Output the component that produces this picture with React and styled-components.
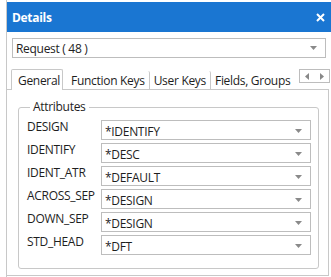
import React from 'react'
import styled, { createGlobalStyle } from 'styled-components'

const GlobalStyle = createGlobalStyle`
    body {
        margin:0;
        background:#fff;
        overflow:hidden;
        font-family:"Open Sans", "Noto Sans", sans-serif;
        font-size:12px;
        letter-spacing:-0.3px;
        color:#1e1e1e;
    }
`;

const attributes = [
    ['DESIGN', '*IDENTIFY'],
    ['IDENTIFY', '*DESC'],
    ['IDENT_ATR', '*DEFAULT'],
    ['ACROSS_SEP', '*DESIGN'],
    ['DOWN_SEP', '*DESIGN'],
    ['STD_HEAD', '*DFT'],
]

const tabs = ['General', 'Function Keys', 'User Keys', 'Fields, Groups']

const Arrow = () => (
    <svg width="7" height="4" viewBox="0 0 7 4">
        <path d="M0 0 L7 0 L3.5 4 Z" fill="#8a8a8a"/>
    </svg>
)

function App() {
    return(
        <Panel>
            <GlobalStyle/>
            <Header>
                <Title>Details</Title>
                <svg width="9" height="9" viewBox="0 0 9 9">
                    <path d="M1 1 L8 8 M8 1 L1 8" stroke="#fff" strokeWidth="2"/>
                </svg>
            </Header>
            <Select>
                <span>Request ( 48 )</span>
                <Arrow/>
            </Select>
            <TabBar>
                {tabs.map((t, i) =>
                    <Tab key={t} active={i === 0} first={i === 1} sep={i > 0 && i < tabs.length - 1}>{t}</Tab>
                )}
                <Scroller>
                    <svg width="4" height="7" viewBox="0 0 4 7"><path d="M4 0 L4 7 L0 3.5 Z" fill="#888"/></svg>
                    <svg width="4" height="7" viewBox="0 0 4 7"><path d="M0 0 L0 7 L4 3.5 Z" fill="#888"/></svg>
                </Scroller>
            </TabBar>
            <TabPage>
                <Group>
                    <Legend>Attributes</Legend>
                    {attributes.map(([label, value]) =>
                        <Row key={label}>
                            <Label>{label}</Label>
                            <Combo>
                                <span>{value}</span>
                                <Arrow/>
                            </Combo>
                        </Row>
                    )}
                </Group>
            </TabPage>
        </Panel>
    )
}

export default App;

const Panel = styled.div`
    margin-left:6px;
    width:340px;
    height:277px;
    padding-top:2px;
    box-sizing:border-box;
    border-left:1px solid #c8c8c8;
`;

const Header = styled.div`
    height:30px;
    background-color:#1a76d2;
    display:flex;
    align-items:center;
    justify-content:space-between;
    padding:0 7px 0 5px;
    box-sizing:border-box;
    width:325px;
`;

const Title = styled.span`
    color:#fff;
    font-weight:700;
    font-size:12px;
`;

const Select = styled.div`
    margin:6px 0 0 5px;
    width:314px;
    height:20px;
    box-sizing:border-box;
    border:1px solid #bdbdbd;
    display:flex;
    align-items:center;
    justify-content:space-between;
    padding:0 8px 0 3px;
`;

const TabBar = styled.div`
    margin:11px 0 0 4px;
    width:319px;
    height:20px;
    display:flex;
    align-items:flex-end;
    position:relative;
`;

const Tab = styled.div`
    height:${p => p.active ? '21px' : '18px'};
    box-sizing:border-box;
    padding:${p => p.active ? '0 2px 0 6px' : '0 4px'};
    margin-left:${p => p.first ? '4px' : '0'};
    display:flex;
    align-items:center;
    white-space:nowrap;
    background:#fff;
    border:${p => p.active ? '1px solid #c8c8c8' : 'none'};
    border-bottom:none;
    border-right:${p => p.sep || p.active ? '1px solid #c8c8c8' : 'none'};
    border-radius:2px 2px 0 0;
    margin-bottom:${p => p.active ? '-1px' : '0'};
    position:relative;
    z-index:1;
`;

const Scroller = styled.div`
    position:absolute;
    right:0;
    top:0;
    width:31px;
    height:14px;
    box-sizing:border-box;
    border:1px solid #bdbdbd;
    background:#fff;
    display:flex;
    align-items:center;
    justify-content:space-around;
    z-index:2;
`;

const TabPage = styled.div`
    margin-left:-1px;
    width:323px;
    height:187px;
    box-sizing:border-box;
    border:1px solid #c8c8c8;
    padding:9px 9px 0 11px;
`;

const Group = styled.fieldset`
    margin:0;
    height:170px;
    box-sizing:border-box;
    border:1px solid #c8c8c8;
    border-radius:3px;
    padding:5px 7px 0 8px;
    display:flex;
    flex-direction:column;
    gap:3px;
`;

const Legend = styled.legend`
    margin-left:3px;
    padding:0 3px;
    line-height:16px;
`;

const Row = styled.div`
    display:flex;
    align-items:flex-start;
    height:20px;
`;

const Label = styled.div`
    width:74px;
    line-height:16px;
    margin-top:-1px;
`;

const Combo = styled.div`
    flex:1;
    height:20px;
    box-sizing:border-box;
    border:1px solid #bdbdbd;
    display:flex;
    align-items:center;
    justify-content:space-between;
    padding:2px 8px 0 3px;
`;
